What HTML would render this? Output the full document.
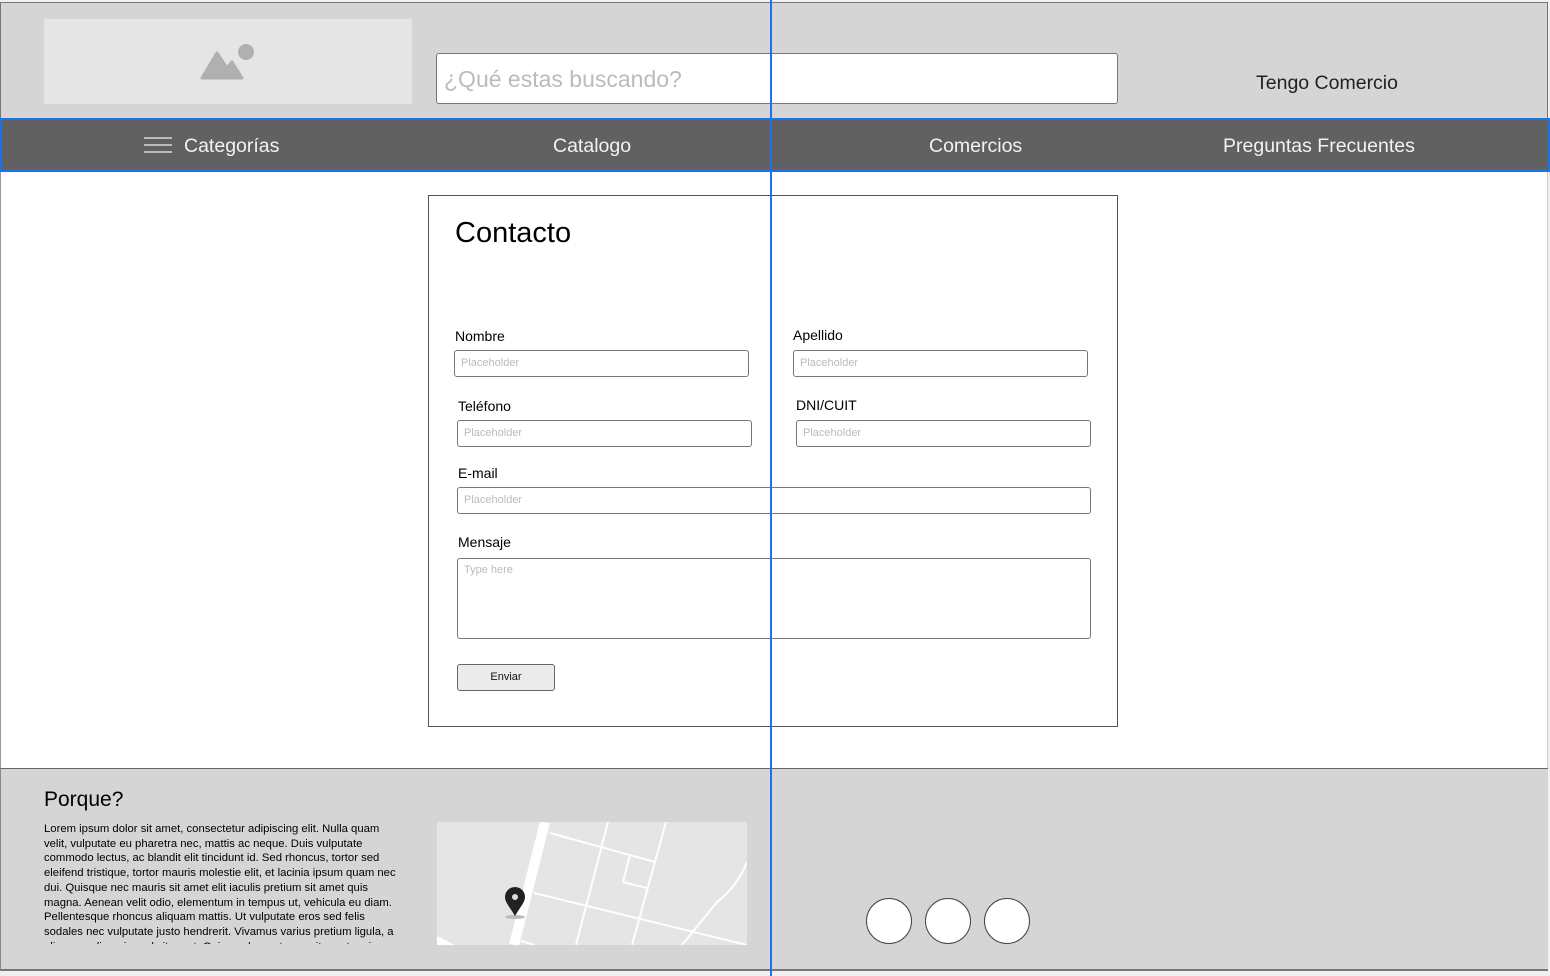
<!DOCTYPE html>
<html><head><meta charset="utf-8"><style>
*{box-sizing:border-box;margin:0;padding:0}
body{width:1550px;height:976px;position:relative;background:#eef0f2;font-family:"Liberation Sans",Arial,sans-serif;overflow:hidden}
.a{position:absolute}
.inp{position:absolute;background:#fff;border:1px solid #777;border-radius:3px;font-size:11px;color:#bbb;padding:0 0 0 6px;line-height:24px}
.lbl{position:absolute;font-size:14px;color:#000}
.nav{position:absolute;top:135px;color:#f2f2f2;font-size:19.5px}
</style></head><body>
<div class="a" style="left:0;top:2px;width:1548px;height:968px;background:#fff;border-left:1px solid #999;border-right:1px solid #ccc"></div>
<div class="a" style="left:0;top:2px;width:1548px;height:117px;background:#d5d5d5;border:1px solid #777;border-bottom:none"></div>
<div class="a" style="left:44px;top:19px;width:368px;height:85px;background:#e5e5e5"></div>
<svg class="a" style="left:200px;top:42px" width="58" height="40" viewBox="0 0 58 40"><circle cx="46" cy="10" r="8" fill="#b0b0b0"/><path d="M2 36 L17 11 L27 26 L32 20 L42 36 Z" fill="#b0b0b0" stroke="#b0b0b0" stroke-width="3" stroke-linejoin="round"/></svg>
<div class="a" style="left:436px;top:53px;width:682px;height:51px;background:#fff;border:1px solid #777;border-radius:3px;color:#bbb;font-size:23px;line-height:51px;padding-left:7px">¿Qué estas buscando?</div>
<div class="a" style="left:1256px;top:72px;font-size:19.5px;color:#222">Tengo Comercio</div>
<div class="a" style="left:0;top:118px;width:1550px;height:54px;background:#616161;border:2px solid #1a73e8;border-bottom:3px solid #1a73e8"></div>
<div class="a" style="left:144px;top:137px;width:28px;height:2px;background:#bbb;box-shadow:0 7px 0 #bbb,0 14px 0 #bbb"></div>
<div class="nav" style="left:184px">Categorías</div>
<div class="nav" style="left:553px">Catalogo</div>
<div class="nav" style="left:929px">Comercios</div>
<div class="nav" style="left:1223px">Preguntas Frecuentes</div>
<div class="a" style="left:428px;top:195px;width:690px;height:532px;border:1px solid #555;background:#fff"></div>
<div class="a" style="left:455px;top:217px;font-size:29px;color:#000">Contacto</div>
<div class="lbl" style="left:455px;top:328px">Nombre</div>
<div class="inp" style="left:454px;top:350px;width:295px;height:27px">Placeholder</div>
<div class="lbl" style="left:793px;top:327px">Apellido</div>
<div class="inp" style="left:793px;top:350px;width:295px;height:27px">Placeholder</div>
<div class="lbl" style="left:458px;top:398px">Teléfono</div>
<div class="inp" style="left:457px;top:420px;width:295px;height:27px">Placeholder</div>
<div class="lbl" style="left:796px;top:397px">DNI/CUIT</div>
<div class="inp" style="left:796px;top:420px;width:295px;height:27px">Placeholder</div>
<div class="lbl" style="left:458px;top:465px">E-mail</div>
<div class="inp" style="left:457px;top:487px;width:634px;height:27px">Placeholder</div>
<div class="lbl" style="left:458px;top:534px">Mensaje</div>
<div class="inp" style="left:457px;top:558px;width:634px;height:81px;line-height:22px">Type here</div>
<div class="a" style="left:457px;top:664px;width:98px;height:27px;background:#ebebeb;border:1px solid #666;border-radius:3px;font-size:11px;text-align:center;line-height:25px;color:#111">Enviar</div>
<div class="a" style="left:0;top:768px;width:1548px;height:203px;background:#d5d5d5;border-top:1px solid #666;border-bottom:2px solid #777;border-left:1px solid #888"></div>
<div class="a" style="left:44px;top:788px;font-size:21px;color:#000">Porque?</div>
<div class="a" style="left:44px;top:822px;width:370px;height:122px;overflow:hidden;white-space:nowrap;font-size:11.3px;line-height:14.7px;color:#000">Lorem ipsum dolor sit amet, consectetur adipiscing elit. Nulla quam<br>velit, vulputate eu pharetra nec, mattis ac neque. Duis vulputate<br>commodo lectus, ac blandit elit tincidunt id. Sed rhoncus, tortor sed<br>eleifend tristique, tortor mauris molestie elit, et lacinia ipsum quam nec<br>dui. Quisque nec mauris sit amet elit iaculis pretium sit amet quis<br>magna. Aenean velit odio, elementum in tempus ut, vehicula eu diam.<br>Pellentesque rhoncus aliquam mattis. Ut vulputate eros sed felis<br>sodales nec vulputate justo hendrerit. Vivamus varius pretium ligula, a<br>aliquam odio euismod sit amet. Quisque laoreet sem sit amet orci.</div>
<svg class="a" style="left:437px;top:822px" width="310" height="123" viewBox="0 0 310 123"><rect width="310" height="123" fill="#e5e5e5"/><g stroke="#fff" fill="none"><path d="M108 0 L77 123" stroke-width="10"/><g stroke-width="2"><path d="M113 11 L218 40"/><path d="M171 0 L139 123"/><path d="M229 0 L195 123"/><path d="M193 33 L186 60 L210 66"/><path d="M97 71 L310 123"/><path d="M84 119 L98 123"/><path d="M310 40 Q300 65 280 80 L245 123"/></g></g><path d="M0 114 L18 123 L0 123Z" fill="#fff"/><ellipse cx="78" cy="95" rx="10" ry="2" fill="#bbb"/><path d="M78 94 C72 84 68 80 68 75 A10 10 0 0 1 88 75 C88 80 84 84 78 94Z" fill="#222"/><circle cx="78" cy="75" r="3" fill="#ddd"/></svg>
<div class="a" style="left:866px;top:898px;width:46px;height:46px;border-radius:50%;background:#fff;border:1px solid #444"></div>
<div class="a" style="left:925px;top:898px;width:46px;height:46px;border-radius:50%;background:#fff;border:1px solid #444"></div>
<div class="a" style="left:984px;top:898px;width:46px;height:46px;border-radius:50%;background:#fff;border:1px solid #444"></div>
<div class="a" style="left:770px;top:0;width:2px;height:976px;background:#1a73e8"></div>
</body></html>
